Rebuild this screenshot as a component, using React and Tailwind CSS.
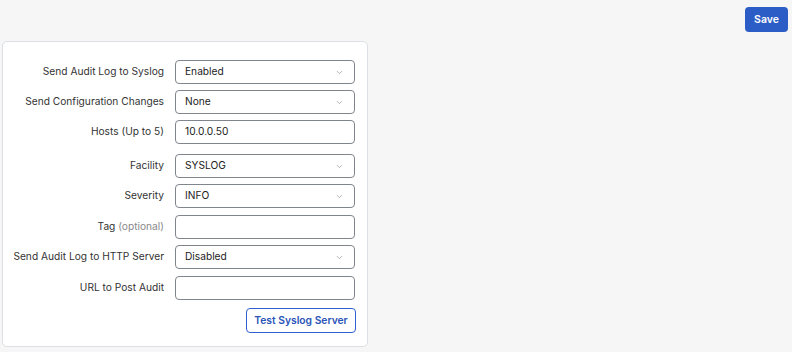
import { ChevronDown } from "lucide-react";

function SelectBox({ value }) {
  return (
    <div className="flex h-[24px] w-[180px] shrink-0 items-center justify-between rounded-[4px] border-[1.5px] border-[#80858d] bg-white pl-[9px] pr-[10px] text-[10.2px] text-[#222]">
      <span>{value}</span>
      <ChevronDown size={9} strokeWidth={1.6} className="text-[#7d8289]" />
    </div>
  );
}

function TextBox({ value }) {
  return (
    <div className="flex h-[24px] w-[180px] shrink-0 items-center rounded-[4px] border-[1.5px] border-[#80858d] bg-white pl-[9px] text-[10.2px] text-[#222]">
      {value}
    </div>
  );
}

function Row({ label, children, className = "" }) {
  return (
    <div className={"flex items-center " + className}>
      <div className="w-[172px] shrink-0 whitespace-nowrap pr-[11px] text-right text-[10.2px] text-[#333]">
        {label}
      </div>
      {children}
    </div>
  );
}

export default function App() {
  return (
    <div className="min-h-[352px] w-[792px] bg-[#f6f6f6] font-['Inter',sans-serif]">
      <div className="flex justify-end pr-[4px] pt-[7px]">
        <button className="h-[25px] w-[43px] rounded-[4px] bg-[#2c5cc5] text-[10.5px] font-semibold text-white">
          Save
        </button>
      </div>
      <div className="ml-[2px] mt-[9px] flex w-[366px] flex-col rounded-[5px] border border-[#dcdfe3] bg-white pb-[13px] pt-[18px]">
        <div className="flex flex-col gap-[6px]">
          <Row label="Send Audit Log to Syslog">
            <SelectBox value="Enabled" />
          </Row>
          <Row label="Send Configuration Changes">
            <SelectBox value="None" />
          </Row>
          <Row label="Hosts (Up to 5)" className="mb-[4px]">
            <TextBox value="10.0.0.50" />
          </Row>
          <Row label="Facility">
            <SelectBox value="SYSLOG" />
          </Row>
          <Row label="Severity" className="mb-[1px]">
            <SelectBox value="INFO" />
          </Row>
          <Row
            label={
              <span>
                Tag <span className="text-[#8a8a8a]">(optional)</span>
              </span>
            }
          >
            <TextBox value="" />
          </Row>
          <Row label="Send Audit Log to HTTP Server" className="mb-[1px]">
            <SelectBox value="Disabled" />
          </Row>
          <Row label="URL to Post Audit">
            <TextBox value="" />
          </Row>
        </div>
        <div className="mt-[8px] flex justify-end pr-[11px]">
          <button className="h-[25px] w-[110px] rounded-[4px] border-[1.5px] border-[#2f5fd0] bg-white text-[10.3px] font-semibold text-[#2b55b8]">
            Test Syslog Server
          </button>
        </div>
      </div>
    </div>
  );
}
